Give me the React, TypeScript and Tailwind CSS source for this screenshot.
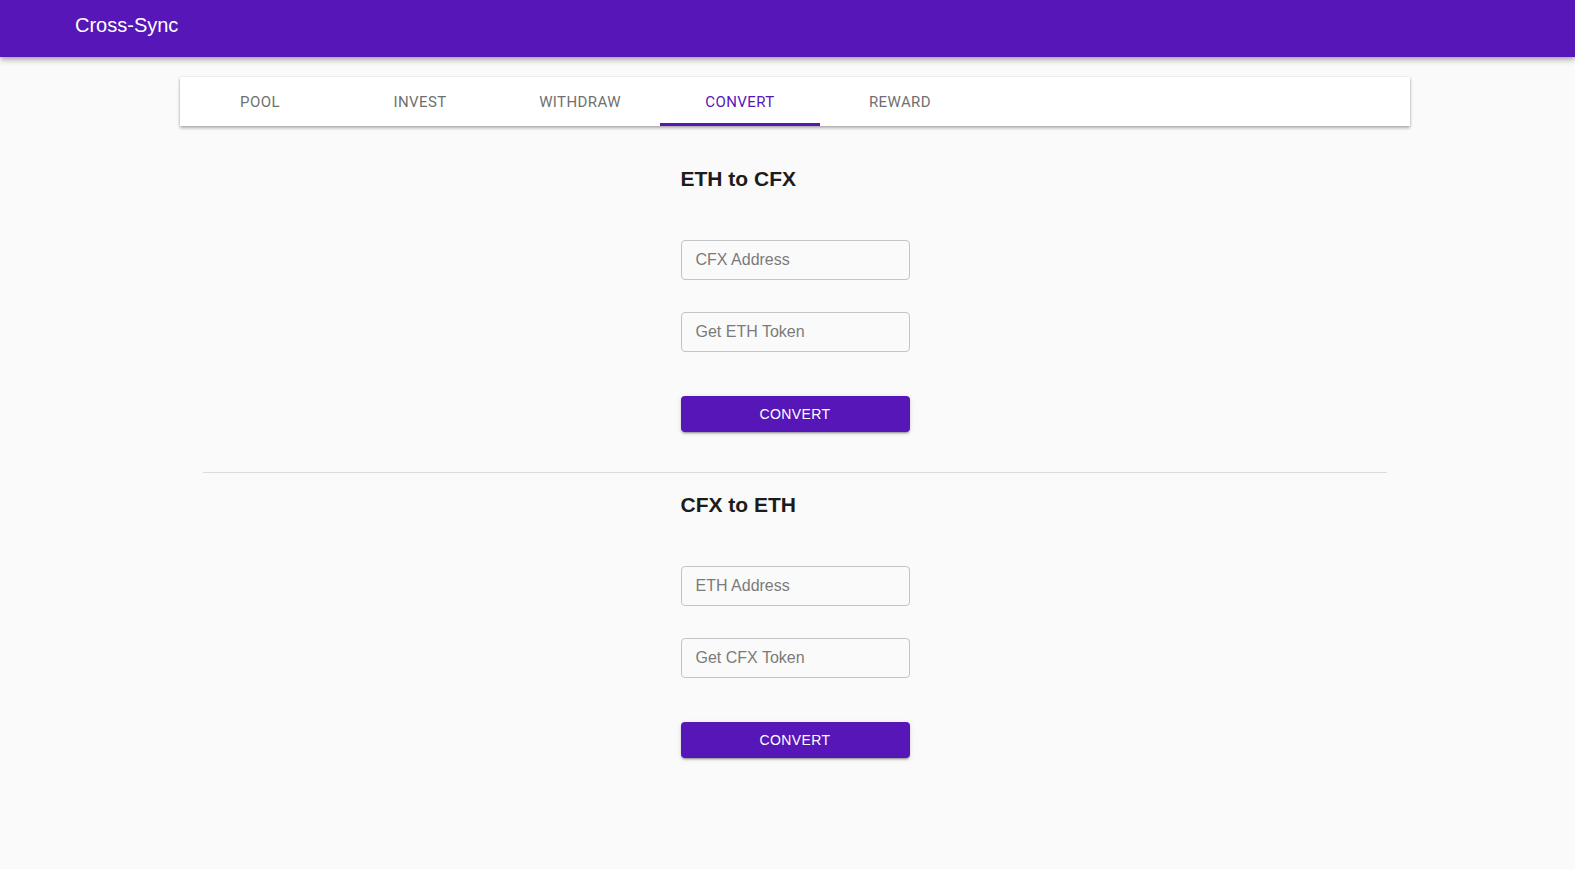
import React, { useState } from "react";

const tabs = ["Pool", "Invest", "Withdraw", "Convert", "Reward"];

function Field({ placeholder }: { placeholder: string }) {
  return (
    <input
      placeholder={placeholder}
      className="block h-[40px] w-full rounded-[4px] border border-[#c4c4c4] bg-transparent px-[14px] text-[16px] text-[#222] outline-none placeholder:text-[#7a7a7a]"
    />
  );
}

function ConvertForm({
  title,
  address,
  token,
}: {
  title: string;
  address: string;
  token: string;
}) {
  return (
    <div className="mx-auto w-[229px]">
      <h2 className="text-[21px] font-bold leading-[24px] text-[#1c1c1c]">
        {title}
      </h2>
      <div className="mt-[49px] flex flex-col gap-[32px]">
        <Field placeholder={address} />
        <Field placeholder={token} />
      </div>
      <button className="mt-[44px] block h-[36px] w-full rounded-[4px] bg-[#5616b8] text-[14px] uppercase tracking-[0.4px] text-white shadow-[0_3px_1px_-2px_rgba(0,0,0,0.2),0_2px_2px_0_rgba(0,0,0,0.14),0_1px_5px_0_rgba(0,0,0,0.12)]">
        Convert
      </button>
    </div>
  );
}

export default function App() {
  const [active, setActive] = useState(3);

  return (
    <div
      className="min-h-[869px] bg-[#fafafa]"
      style={{ fontFamily: '"Liberation Sans", Arial, sans-serif' }}
    >
      <header className="relative z-10 h-[57px] bg-[#5616b8] pl-[75px] pt-[13px] shadow-[0_2px_4px_-1px_rgba(0,0,0,0.2),0_4px_5px_0_rgba(0,0,0,0.14),0_1px_10px_0_rgba(0,0,0,0.12)]">
        <h1 className="text-[20px] leading-[24px] text-white">Cross-Sync</h1>
      </header>

      <div className="ml-[180px] w-[1230px] pt-[20px]">
        <nav className="flex h-[49px] bg-white shadow-[0_2px_3px_0_rgba(0,0,0,0.3),0_0_2px_0_rgba(0,0,0,0.12)]">
          {tabs.map((t, i) => (
            <button
              key={t}
              onClick={() => setActive(i)}
              className={
                "relative w-[160px] pt-[1px] text-[15px] font-normal uppercase tracking-[0.4px] " +
                (i === active ? "text-[#5616b8]" : "text-[#707070]")
              }
              style={{ fontFamily: "Roboto, sans-serif" }}
            >
              {t}
              {i === active && (
                <span className="absolute bottom-0 left-0 h-[3px] w-full bg-[#5616b8]" />
              )}
            </button>
          ))}
        </nav>

        <div className="mt-[41px]">
          <ConvertForm
            title="ETH to CFX"
            address="CFX Address"
            token="Get ETH Token"
          />
        </div>

        <hr className="mx-[23px] mt-[40px] border-0 border-t border-[#dcdcdc]" />

        <div className="mt-[20px] pb-[60px]">
          <ConvertForm
            title="CFX to ETH"
            address="ETH Address"
            token="Get CFX Token"
          />
        </div>
      </div>
    </div>
  );
}
